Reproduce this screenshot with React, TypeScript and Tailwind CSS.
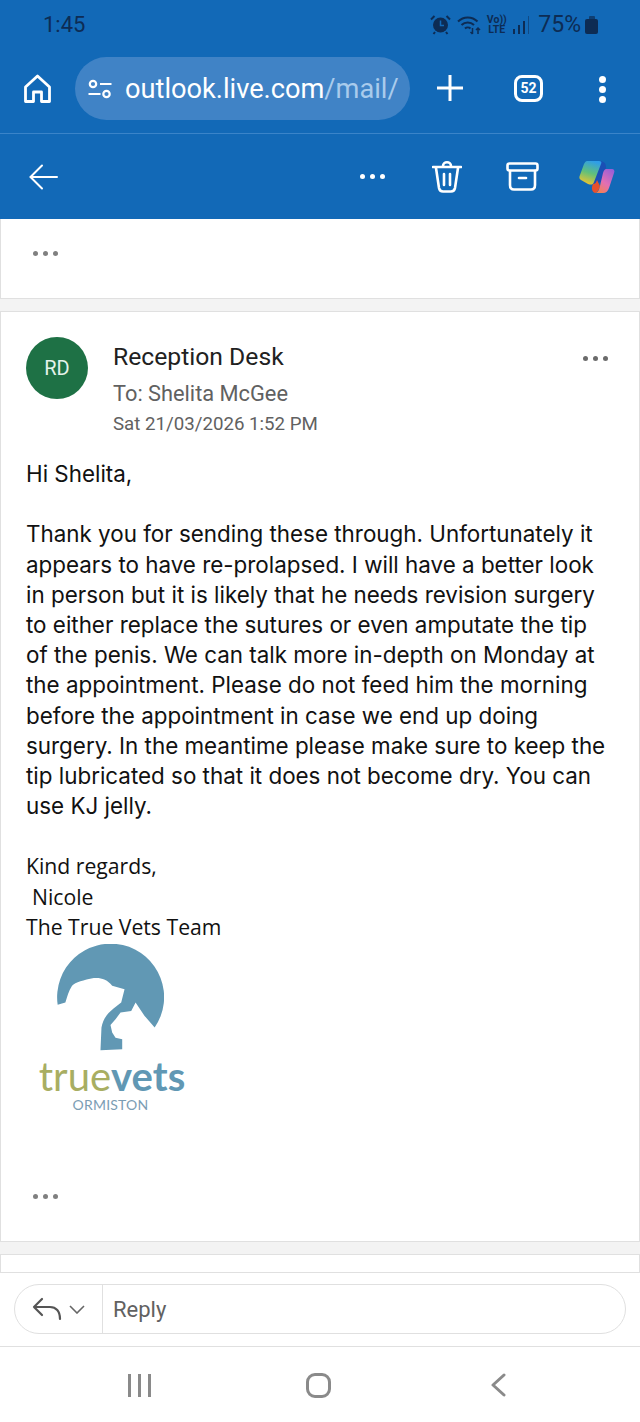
import React from "react";

const bodyLines = [
  "Thank you for sending these through. Unfortunately it",
  "appears to have re-prolapsed. I will have a better look",
  "in person but it is likely that he needs revision surgery",
  "to either replace the sutures or even amputate the tip",
  "of the penis. We can talk more in-depth on Monday at",
  "the appointment. Please do not feed him the morning",
  "before the appointment in case we end up doing",
  "surgery. In the meantime please make sure to keep the",
  "tip lubricated so that it does not become dry. You can",
  "use KJ jelly.",
];

function Dots({ className }: { className: string }) {
  return (
    <div className={"flex gap-[5px] " + className}>
      <span className="size-[5px] rounded-full bg-current" />
      <span className="size-[5px] rounded-full bg-current" />
      <span className="size-[5px] rounded-full bg-current" />
    </div>
  );
}

function StatusIcons() {
  return (
    <div className="mt-[1px] flex items-center text-[#0d2c54]">
      <svg width="21" height="21" viewBox="0 0 21 21" className="mr-[6px]">
        <circle cx="10.5" cy="11" r="7.5" fill="currentColor" />
        <path d="M10.5 6.5V11.5H14" stroke="#1269b7" strokeWidth="1.5" fill="none" />
        <path d="M1 5.5L4.5 2M20 5.5L16.5 2M5 18L3.5 20M16 18L17.5 20" stroke="currentColor" strokeWidth="2" />
      </svg>
      <svg width="25" height="20" viewBox="0 0 25 20" className="mr-[5px]" fill="none" stroke="currentColor">
        <path d="M1 6.5C6.5 1 15 1 20.5 6.5" strokeWidth="2" />
        <path d="M4.5 10C8 6.5 13.5 6.5 17 10" strokeWidth="2" />
        <path d="M8 13.5C9.5 12 12 12 13.5 13.5" strokeWidth="2" />
        <path d="M15.5 13V19M13.5 17L15.5 19M21 19V13M19 15L21 13L23 15" strokeWidth="1.5" />
      </svg>
      <div className="mr-[7px] flex w-[19px] flex-col items-center font-['Roboto',sans-serif] text-[10.5px] leading-[10px] font-bold">
        <span>Vo))</span>
        <span>LTE</span>
      </div>
      <div className="mr-[9px] flex h-[18px] items-end gap-[3px]">
        <span className="h-[5px] w-[2px] bg-current" />
        <span className="h-[9px] w-[2px] bg-current" />
        <span className="h-[13px] w-[2px] bg-current" />
        <span className="h-[18px] w-[1px] bg-current opacity-50" />
      </div>
      <span className="mr-[4px] font-['Roboto',sans-serif] text-[23px] leading-none">75%</span>
      <div className="flex flex-col items-center">
        <span className="h-[3px] w-[6px] rounded-t-[1px] bg-current opacity-70" />
        <span className="h-[15px] w-[13px] rounded-[2px] bg-current" />
      </div>
    </div>
  );
}

function CopilotIcon() {
  return (
    <svg width="36" height="34" viewBox="0 0 36 34">
      <defs>
        <linearGradient id="cpLeft" x1="0.6" y1="0" x2="0.3" y2="1">
          <stop offset="0" stopColor="#2f9ee8" />
          <stop offset="0.5" stopColor="#62c07a" />
          <stop offset="1" stopColor="#f3c52c" />
        </linearGradient>
        <linearGradient id="cpRight" x1="0.8" y1="0" x2="0.2" y2="1">
          <stop offset="0" stopColor="#9a5fd6" />
          <stop offset="0.55" stopColor="#e26fb4" />
          <stop offset="1" stopColor="#f4814e" />
        </linearGradient>
      </defs>
      <path d="M20 1C25 1 27 3 27 8L22 22L14 24L16 8Z" fill="#1b4fb5" />
      <path d="M8 1H20C22 1 23 2 22 4L15 22C14 25 12 25 9 24L2 20C0 19 0 17 1 15L5 4C6 2 7 1 8 1Z" fill="url(#cpLeft)" />
      <path d="M14 24C16 24 17 23 18 20L21 26C20 30 18 33 16 33C13 32 12 28 14 24Z" fill="#e8502c" />
      <path d="M27 9H33C35 9 36 11 35 13L30 28C29 31 27 33 24 33H16C19 33 20 30 21 26L24 13C25 10 26 9 27 9Z" fill="url(#cpRight)" />
    </svg>
  );
}

function BrowserBar() {
  return (
    <div className="flex h-[76px] items-start pl-[24px] text-white">
      <svg width="27" height="30" viewBox="0 0 27 30" fill="none" stroke="white" strokeWidth="2.8" className="mt-[17px]">
        <path d="M1.5 13L13.5 2L25.5 13V27.5H17.5V18H9.5V27.5H1.5Z" strokeLinejoin="round" />
      </svg>
      <div className="ml-[24px] flex h-[63px] w-[335px] shrink-0 items-center rounded-full bg-[#4083c6] pl-[13px]">
        <svg width="24" height="20" viewBox="0 0 24 20" fill="none" stroke="white" strokeWidth="2.2">
          <circle cx="5" cy="5" r="3.2" />
          <path d="M12 5H23.5M0.5 15H12.5" />
          <circle cx="18.5" cy="15" r="3.2" />
        </svg>
        <span className="ml-[13px] mt-[2px] font-['Roboto',sans-serif] text-[27.2px] leading-none whitespace-nowrap">
          outlook.live.com<span className="text-[#a9cbec]">/mail/</span>
        </span>
      </div>
      <svg width="26" height="26" viewBox="0 0 26 26" stroke="white" strokeWidth="3" className="ml-[27px] mt-[18px]">
        <path d="M13 0V26M0 13H26" />
      </svg>
      <div className="ml-[51px] mt-[18px] flex h-[27px] w-[29px] shrink-0 items-center justify-center rounded-[8px] border-[3px] border-white font-['Roboto',sans-serif] text-[14px] font-bold">
        52
      </div>
      <div className="ml-[56px] mt-[19px] flex flex-col gap-[3px]">
        <span className="size-[7px] rounded-full bg-white" />
        <span className="size-[7px] rounded-full bg-white" />
        <span className="size-[7px] rounded-full bg-white" />
      </div>
    </div>
  );
}

function Toolbar() {
  return (
    <div className="flex h-[86px] items-center border-t border-[#3a84c9] pl-[29px] text-white">
      <svg width="29" height="26" viewBox="0 0 29 26" fill="none" stroke="white" strokeWidth="2" strokeLinecap="round">
        <path d="M28 13H2M13 1.5L1.5 13L13 24.5" />
      </svg>
      <Dots className="ml-[302px] text-white" />
      <svg width="30" height="33" viewBox="0 0 30 33" fill="none" stroke="white" strokeWidth="2.6" className="ml-[47px]" strokeLinecap="round">
        <path d="M1 7H29M11 6C11 1 19 1 19 6" />
        <path d="M4 8L7 28C7.5 30.5 9 31.5 11 31.5H19C21 31.5 22.5 30.5 23 28L26 8" />
        <path d="M12 14V25M18 14V25" />
      </svg>
      <svg width="33" height="29" viewBox="0 0 33 29" fill="none" stroke="white" strokeWidth="2.6" className="ml-[44px]" strokeLinecap="round">
        <rect x="1.5" y="1.5" width="30" height="7" rx="2" />
        <path d="M4 9V23C4 26 5.5 27.5 8 27.5H25C27.5 27.5 29 26 29 23V9" />
        <path d="M13 16H20" />
      </svg>
      <div className="ml-[40px]">
        <CopilotIcon />
      </div>
    </div>
  );
}

function Header() {
  return (
    <div className="bg-[#1269b7]">
      <div className="flex h-[57px] items-start justify-between pl-[43px] pr-[42px] pt-[12px]">
        <span className="font-['Roboto',sans-serif] text-[22px] leading-[26px] text-[#0d2c54]">1:45</span>
        <StatusIcons />
      </div>
      <BrowserBar />
      <Toolbar />
    </div>
  );
}

function TrueVetsLogo() {
  return (
    <div className="ml-[31px] mt-[2px] flex w-[160px] flex-col items-center">
      <svg width="107" height="107" viewBox="170 40 320 320" className="ml-[-4px]">
        <path
          d="M172 222A160 160 0 1 1 462 290L432 255L405 215L392 240L360 245L345 265L330 282L335 305L345 320L365 325V355L300 358L303 290C308 265 318 250 340 232L362 215L372 175L335 165C320 145 300 140 280 142C250 148 225 155 215 165C205 180 200 200 195 215Z"
          fill="#6198b4"
        />
      </svg>
      <div className="mt-[6px] flex font-['Lato',sans-serif] text-[40px] leading-[38px]">
        <span className="font-normal text-[#a8ae62]">true</span>
        <span className="font-bold text-[#6198b4]">vets</span>
      </div>
      <span className="ml-[-3px] mt-[2px] font-['Lato',sans-serif] text-[14px] leading-[16px] tracking-[0.2px] text-[#7b9db4]">ORMISTON</span>
    </div>
  );
}

function Message() {
  return (
    <div className="h-[929px] border-x border-[#e0e0e0] bg-white">
      <div className="flex pl-[25px] pt-[25px]">
        <div className="flex size-[62px] shrink-0 items-center justify-center rounded-full bg-[#1e7145] font-['Roboto',sans-serif] text-[20px] text-[#e4f2ea]">
          RD
        </div>
        <div className="ml-[25px] font-['Roboto',sans-serif]">
          <div className="mt-[4px] text-[24.7px] leading-[32px] text-[#212121]">Reception Desk</div>
          <div className="mt-[8px] text-[21.8px] leading-[26px] text-[#616161]">To: Shelita McGee</div>
          <div className="mt-[4px] text-[18.7px] leading-[26px] text-[#616161]">Sat 21/03/2026 1:52 PM</div>
        </div>
        <Dots className="ml-[265px] mt-[19px] text-[#6b6b6b]" />
      </div>
      <div className="mt-[22px] pl-[25px] font-['Inter',sans-serif] text-[22.4px] leading-[30.2px] whitespace-nowrap text-[#111111]">
        <div>Hi Shelita,</div>
        <div className="h-[30.2px]" />
        {bodyLines.map((line) => (
          <div key={line}>{line}</div>
        ))}
      </div>
      <div className="mt-[30px] pl-[25px] font-['Open_Sans',sans-serif] text-[21.2px] leading-[30.2px] whitespace-nowrap text-[#111111]">
        <div>Kind regards,</div>
        <div className="pl-[6px]">Nicole</div>
        <div>The True Vets Team</div>
      </div>
      <TrueVetsLogo />
      <Dots className="ml-[32px] mt-[81px] text-[#808080]" />
    </div>
  );
}

function ReplyBar() {
  return (
    <div className="border-y border-[#e0e0e0] bg-white px-[14px] pb-[12px] pt-[11px]">
      <div className="flex h-[50px] items-center rounded-full border border-[#e0e0e0]">
        <div className="flex h-full w-[88px] items-center border-r border-[#e0e0e0] pl-[17px] text-[#555555]">
          <svg width="30" height="24" viewBox="0 0 30 24" fill="none" stroke="currentColor" strokeWidth="2.2" strokeLinecap="round" strokeLinejoin="round">
            <path d="M10 2L2 10L10 18M2 10H18C24 10 28 14 28 22" />
          </svg>
          <svg width="16" height="9" viewBox="0 0 16 9" fill="none" stroke="#666666" strokeWidth="1.6" className="ml-[7px]">
            <path d="M1 1L8 8L15 1" />
          </svg>
        </div>
        <span className="ml-[10px] font-['Roboto',sans-serif] text-[22px] text-[#616161]">Reply</span>
      </div>
    </div>
  );
}

function NavBar() {
  return (
    <div className="flex h-[75px] items-center bg-white pt-[1px] text-[#8a8a8a]">
      <div className="ml-[128px] flex h-[23px] gap-[7px]">
        <span className="w-[3px] bg-current" />
        <span className="w-[3px] bg-current" />
        <span className="w-[3px] bg-current" />
      </div>
      <div className="ml-[155px] h-[25px] w-[25px] rounded-[9px] border-[3.5px] border-current" />
      <svg width="15" height="24" viewBox="0 0 15 24" fill="none" stroke="currentColor" strokeWidth="3" strokeLinecap="round" strokeLinejoin="round" className="ml-[160px]">
        <path d="M13 2L2 12L13 22" />
      </svg>
    </div>
  );
}

export default function App() {
  return (
    <div className="h-[1422px] w-[640px] overflow-hidden bg-white">
      <Header />
      <div className="h-[79px] border-x border-[#e0e0e0] bg-white pl-[32px] pt-[32px]">
        <Dots className="text-[#808080]" />
      </div>
      <div className="h-[14px] border-y border-[#e0e0e0] bg-[#f3f3f3]" />
      <Message />
      <div className="h-[14px] border-y border-[#e0e0e0] bg-[#f3f3f3]" />
      <div className="h-[17px] border-x border-[#e0e0e0] bg-white" />
      <ReplyBar />
      <NavBar />
    </div>
  );
}
